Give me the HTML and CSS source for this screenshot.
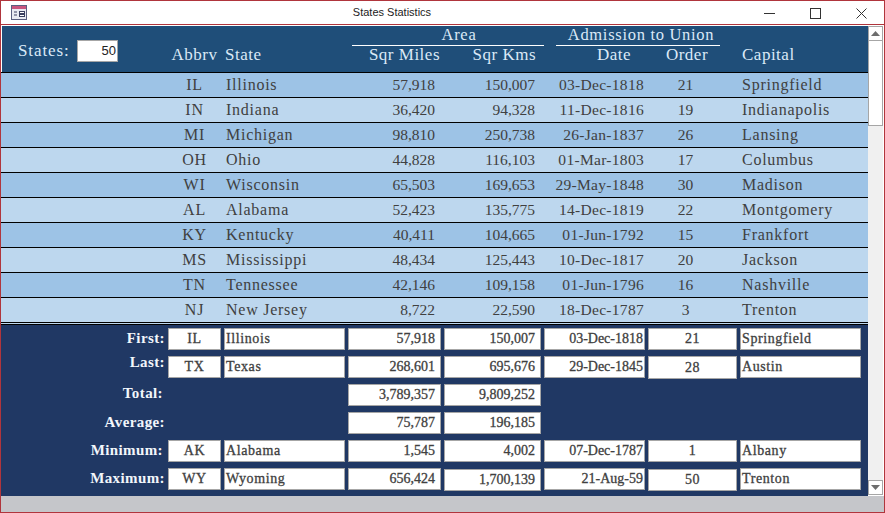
FILE: index.html
```html
<!DOCTYPE html>
<html lang="en">
<head>
<meta charset="utf-8">
<title>States Statistics</title>
<link rel="stylesheet" href="styles.css">
</head>
<body>
<div class="window">
  <div class="titlebar">
    <svg class="app-icon" width="16" height="15" viewBox="0 0 16 15"><rect x="0.5" y="0.5" width="15" height="14" fill="#e8eaf2" stroke="#5a5f80"/><rect x="1" y="1" width="14" height="3" fill="#c8557f"/><path d="M3 7h3M3 10h3" stroke="#3a3f60"/><rect x="8.5" y="6.5" width="5" height="2" fill="#fff" stroke="#3a3f60"/><rect x="8.5" y="9.5" width="5" height="2" fill="#fff" stroke="#3a3f60"/></svg>
    <div class="title">States Statistics</div>
    <div class="controls">
      <svg width="11" height="11" viewBox="0 0 11 11"><path d="M0 5.5h11" stroke="#333"/></svg>
      <svg width="11" height="11" viewBox="0 0 11 11"><rect x="0.5" y="0.5" width="10" height="10" fill="none" stroke="#333"/></svg>
      <svg width="11" height="11" viewBox="0 0 11 11"><path d="M0.5 0.5l10 10M10.5 0.5l-10 10" stroke="#333"/></svg>
    </div>
  </div>
  <div class="client">
    <div class="form">
      <header class="head">
        <div class="states-box"><span class="states-label">States:</span><span class="states-input">50</span></div>
        <div class="groups">
          <div class="group group-area">Area</div>
          <div class="group group-adm">Admission to Union</div>
        </div>
        <div class="grid head-cols">
          <span class="c-abbr">Abbrv</span><span class="c-state">State</span><span class="c-miles">Sqr Miles</span><span class="c-kms">Sqr Kms</span><span class="c-date">Date</span><span class="c-order">Order</span><span class="c-cap">Capital</span>
        </div>
      </header>
      <section class="rows">
        <div class="grid row"><span class="c-abbr">IL</span><span class="c-state">Illinois</span><span class="c-miles">57,918</span><span class="c-kms">150,007</span><span class="c-date">03-Dec-1818</span><span class="c-order">21</span><span class="c-cap">Springfield</span></div>
        <div class="grid row"><span class="c-abbr">IN</span><span class="c-state">Indiana</span><span class="c-miles">36,420</span><span class="c-kms">94,328</span><span class="c-date">11-Dec-1816</span><span class="c-order">19</span><span class="c-cap">Indianapolis</span></div>
        <div class="grid row"><span class="c-abbr">MI</span><span class="c-state">Michigan</span><span class="c-miles">98,810</span><span class="c-kms">250,738</span><span class="c-date">26-Jan-1837</span><span class="c-order">26</span><span class="c-cap">Lansing</span></div>
        <div class="grid row"><span class="c-abbr">OH</span><span class="c-state">Ohio</span><span class="c-miles">44,828</span><span class="c-kms">116,103</span><span class="c-date">01-Mar-1803</span><span class="c-order">17</span><span class="c-cap">Columbus</span></div>
        <div class="grid row"><span class="c-abbr">WI</span><span class="c-state">Wisconsin</span><span class="c-miles">65,503</span><span class="c-kms">169,653</span><span class="c-date">29-May-1848</span><span class="c-order">30</span><span class="c-cap">Madison</span></div>
        <div class="grid row"><span class="c-abbr">AL</span><span class="c-state">Alabama</span><span class="c-miles">52,423</span><span class="c-kms">135,775</span><span class="c-date">14-Dec-1819</span><span class="c-order">22</span><span class="c-cap">Montgomery</span></div>
        <div class="grid row"><span class="c-abbr">KY</span><span class="c-state">Kentucky</span><span class="c-miles">40,411</span><span class="c-kms">104,665</span><span class="c-date">01-Jun-1792</span><span class="c-order">15</span><span class="c-cap">Frankfort</span></div>
        <div class="grid row"><span class="c-abbr">MS</span><span class="c-state">Mississippi</span><span class="c-miles">48,434</span><span class="c-kms">125,443</span><span class="c-date">10-Dec-1817</span><span class="c-order">20</span><span class="c-cap">Jackson</span></div>
        <div class="grid row"><span class="c-abbr">TN</span><span class="c-state">Tennessee</span><span class="c-miles">42,146</span><span class="c-kms">109,158</span><span class="c-date">01-Jun-1796</span><span class="c-order">16</span><span class="c-cap">Nashville</span></div>
        <div class="grid row"><span class="c-abbr">NJ</span><span class="c-state">New Jersey</span><span class="c-miles">8,722</span><span class="c-kms">22,590</span><span class="c-date">18-Dec-1787</span><span class="c-order">3</span><span class="c-cap">Trenton</span></div>
      </section>
      <footer class="foot">
        <div class="frow"><label>First:</label><b class="ctr">IL</b><b>Illinois</b><b class="rgt">57,918</b><b class="rgt">150,007</b><b class="rgt dt">03-Dec-1818</b><b class="ctr">21</b><b>Springfield</b></div>
        <div class="frow"><label class="up">Last:</label><b class="ctr">TX</b><b>Texas</b><b class="rgt">268,601</b><b class="rgt">695,676</b><b class="rgt dt">29-Dec-1845</b><b class="ctr tall">28</b><b>Austin</b></div>
        <div class="frow"><label class="in hi">Total:</label><i></i><i></i><b class="rgt">3,789,357</b><b class="rgt">9,809,252</b></div>
        <div class="frow"><label>Average:</label><i></i><i></i><b class="rgt">75,787</b><b class="rgt">196,185</b></div>
        <div class="frow"><label class="in">Minimum:</label><b class="ctr">AK</b><b>Alabama</b><b class="rgt">1,545</b><b class="rgt">4,002</b><b class="rgt dt">07-Dec-1787</b><b class="ctr">1</b><b>Albany</b></div>
        <div class="frow"><label>Maximum:</label><b class="ctr">WY</b><b>Wyoming</b><b class="rgt">656,424</b><b class="rgt low">1,700,139</b><b class="rgt dt">21-Aug-59</b><b class="ctr low">50</b><b>Trenton</b></div>
      </footer>
    </div>
    <aside class="scroll">
      <div class="sbtn"><svg width="9" height="5" viewBox="0 0 9 5"><path d="M4.5 0L9 5H0z" fill="#6d6d6d"/></svg></div>
      <div class="thumb"></div>
      <div class="strack"></div>
      <div class="sbtn"><svg width="9" height="5" viewBox="0 0 9 5"><path d="M0 0h9L4.500 5z" fill="#6d6d6d"/></svg></div>
    </aside>
  </div>
  <div class="statusbar"></div>
</div>
</body>
</html>
```

FILE: styles.css
```css
* { box-sizing: border-box; }
html, body { margin: 0; padding: 0; }
body { width: 885px; height: 513px; overflow: hidden; background: #fff; font-family: "Liberation Serif", serif; }
.window { width: 885px; height: 513px; border: 1px solid #b0353c; display: flex; flex-direction: column; }
.titlebar { flex: none; display: flex; align-items: center; position: relative; background: #fff; border-bottom: 1px solid #b0353c; height: 24px; }
.app-icon { margin-left: 10px; }
.title { position: absolute; left: 0; right: 0; top: 5px; text-align: center; font: 11px "Liberation Sans", sans-serif; color: #222; padding-right: 101px; }
.controls { position: absolute; right: 17px; top: 7px; display: flex; gap: 35px; }
.controls svg { display: block; }
.client { display: flex; height: 471px; flex: none; }
.form { width: 867px; flex: none; }
.head { height: 47px; background: #1f4e79; color: #dbe9f7; position: relative; font-size: 17px; border-left: 1px solid #fff; border-top: 1px solid #fff; }
.states-box { position: absolute; left: 16px; top: 14px; display: flex; align-items: flex-start; font-size: 17px; }
.states-label { width: 59px; letter-spacing: .9px; line-height: 21px; }
.states-input { width: 41px; height: 22px; background: #fff; border: 1px solid #a6a6a6; color: #222; font: 13px/20px "Liberation Sans", sans-serif; text-align: right; padding-right: 1px; }
.groups { position: absolute; top: 0; left: 0; width: 100%; height: 20px; }
.group { position: absolute; top: 0; height: 20px; border-bottom: 1px solid #fff; text-align: center; line-height: 18px; font-size: 16.500px; letter-spacing: .7px; }
.group-area { left: 350px; width: 192px; padding-left: 22px; }
.group-adm { left: 554px; width: 164px; padding-left: 6px; }
.grid { display: grid; grid-template-columns: 167px 53px 3px 121px 3px 93px 3px 97px 3px 101px 3px 89px 3px 121px; }
.grid .c-abbr { grid-column: 2; text-align: center; }
.grid .c-state { grid-column: 4; padding-left: 2px; }
.grid .c-miles { grid-column: 6; text-align: right; padding-right: 6px; }
.grid .c-kms { grid-column: 8; text-align: right; padding-right: 6px; }
.grid .c-date { grid-column: 10; text-align: right; padding-right: 1px; }
.grid .c-order { grid-column: 12; text-align: center; padding-right: 14px; }
.grid .c-cap { grid-column: 14; padding-left: 2px; }
.head-cols { position: absolute; top: 19px; left: -1px; width: 868px; line-height: 20px; letter-spacing: .5px; }
.head-cols .c-state { padding-left: 1px; }
.head-cols .c-miles { padding-right: 1px; }
.head-cols .c-kms { padding-right: 5px; }
.head-cols .c-date { padding-right: 14px; }
.head-cols .c-order { padding-right: 11px; }
.row { height: 25px; border-top: 1px solid #000; font-size: 16px; line-height: 24px; color: #404040; letter-spacing: .75px; background: #9dc3e6; }
.row:nth-child(even) { background: #bdd7ee; }
.row .c-miles, .row .c-kms, .row .c-order { font-size: 15.500px; letter-spacing: 0; }
.row .c-date { font-size: 15.500px; letter-spacing: .3px; }
.row:last-child { height: 28px; border-bottom: 1px solid #000; box-shadow: inset 0 -1px 0 #bdd7ee, inset 0 -2px 0 #000; }
.foot { height: 171px; background: #203864; padding-top: 3px; }
.frow { height: 28px; display: flex; gap: 3px; align-items: flex-start; }
.frow label { width: 164px; text-align: right; color: #f2f6fb; font-size: 15px; font-weight: bold; line-height: 20px; letter-spacing: .4px; }
.frow label.up { margin-top: -4px; height: 20px; }
.frow label.in { padding-right: 2px; }
.frow label.hi { margin-top: -1px; }
.frow b, .frow i { display: block; font-style: normal; height: 22px; background: #fff; border: 1px solid #a6a6a6; font-size: 14px; font-weight: normal; -webkit-text-stroke: .3px #404040; line-height: 20px; color: #404040; padding: 0 1px 0 1px; white-space: nowrap; overflow: hidden; letter-spacing: .6px; }
.frow i { background: none; border: 0; }
.frow > :nth-child(2) { width: 53px; }
.frow > :nth-child(3) { width: 121px; }
.frow > :nth-child(4) { width: 93px; }
.frow > :nth-child(5) { width: 97px; }
.frow > :nth-child(6) { width: 101px; }
.frow > :nth-child(7) { width: 89px; }
.frow > :nth-child(8) { width: 121px; }
.frow .ctr { text-align: center; }
.frow .rgt { text-align: right; padding-right: 5px; letter-spacing: 0; }
.frow .dt { padding-right: 1px; }
.frow .tall { height: 23px; line-height: 21px; }
.frow .low { margin-top: 1px; }
.scroll { flex: 1; margin: 1px 1px 1px 0; display: flex; flex-direction: column; background: #f0f0f0; }
.sbtn { height: 15px; width: 15px; background: #fff; border: 1px solid #a6a6a6; display: flex; align-items: center; justify-content: center; flex: none; }
.thumb { height: 85px; background: #fff; border: 1px solid #a6a6a6; border-top: 0; width: 15px; flex: none; }
.strack { flex: 1; }
.statusbar { flex: 1; background: #c5c6ca; }
```
